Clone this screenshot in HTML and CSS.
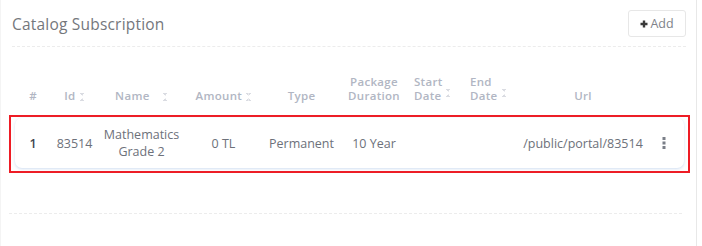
FILE: index.html
```html
<!DOCTYPE html>
<html>
<head>
<meta charset="utf-8">
<link rel="stylesheet" href="styles.css">
</head>
<body>
<div class="card">
  <div class="card-header">
    <h2 class="title">Catalog Subscription</h2>
    <button class="add-btn"><svg class="plus" width="8" height="8" viewBox="0 0 8 8"><path d="M4 0.5V7.5M0.5 4H7.5" stroke="#3a3a3a" stroke-width="2.4"/></svg>Add</button>
  </div>
  <div class="table">
    <div class="grid head">
      <div class="c center">#</div>
      <div class="c center">Id <span class="sort"></span></div>
      <div class="c center">Name <span class="sort gap"></span></div>
      <div class="c center">Amount <span class="sort"></span></div>
      <div class="c center">Type</div>
      <div class="c center two"><span class="ln">Package</span><span class="ln">Duration</span></div>
      <div class="c left two"><span class="ln">Start</span><span class="ln">Date <span class="sort up"></span></span></div>
      <div class="c left pl two"><span class="ln">End</span><span class="ln">Date <span class="sort up"></span></span></div>
      <div class="c center">Url</div>
      <div class="c"></div>
    </div>
    <div class="highlight">
      <div class="grid row">
        <div class="c center num">1</div>
        <div class="c center">83514</div>
        <div class="c center">Mathematics<br>Grade 2</div>
        <div class="c center">0 TL</div>
        <div class="c center">Permanent</div>
        <div class="c center">10 Year</div>
        <div class="c"></div>
        <div class="c"></div>
        <div class="c center">/public/portal/83514</div>
        <div class="c kebab"><svg width="4" height="12" viewBox="0 0 4 12"><rect x="0.5" y="0" width="3" height="3" fill="#7a7f88"/><rect x="0.5" y="4.5" width="3" height="3" fill="#7a7f88"/><rect x="0.5" y="9" width="3" height="3" fill="#7a7f88"/></svg></div>
      </div>
    </div>
    <div class="foot-line"></div>
  </div>
</div>
</body>
</html>
```
FILE: styles.css
```css
html, body {
  margin: 0;
  background: #fff;
}
body {
  font-family: "Open Sans", "Noto Sans", sans-serif;
}
.card {
  width: 697px;
  height: 246px;
  box-sizing: border-box;
  border-left: 1px solid #f4f4f4;
  border-right: 1px solid #e8e8e8;
}
.card-header {
  display: flex;
  justify-content: space-between;
  align-items: center;
  margin: 0 10px 0 11px;
  padding: 10px 0 9px;
  border-bottom: 1px dashed #ececec;
}
.title {
  margin: 0;
  font-size: 15.5px;
  font-weight: 400;
  color: #74777c;
  letter-spacing: 0.2px;
}
.add-btn {
  display: flex;
  align-items: center;
  gap: 2px;
  height: 27px;
  width: 58px;
  justify-content: center;
  border: 1px solid #e7e7e7;
  border-radius: 3px;
  background: #fff;
  font-family: inherit;
  font-size: 12.5px;
  color: #80838a;
  padding: 0;
}
.table {
  padding-top: 28px;
}
.grid {
  display: grid;
  grid-template-columns: 36px 47px 87px 77px 79px 66px 50px 55px 142px 30px;
}
.head {
  margin: 0 0 0 14px;
  height: 27px;
  align-items: end;
  font-size: 11.5px;
  line-height: 13px;
  font-weight: 600;
  color: #b1b6c3;
  letter-spacing: 0.3px;
}
.two {
  display: flex;
  flex-direction: column;
  gap: 1px;
}
.two.center { align-items: center; }
.ln { display: block; white-space: nowrap; }
.c.center { text-align: center; }
.c.left { text-align: left; padding-left: 7px; }
.c.pl { padding-left: 13px; }
.sort {
  display: inline-block;
  width: 5px;
  height: 8px;
  margin-left: 1px;
  vertical-align: -1px;
  background:
    linear-gradient(to top right, transparent 50%, #dadce2 50%) 0 0/2.5px 3px no-repeat,
    linear-gradient(to top left, transparent 50%, #dadce2 50%) 2.5px 0/2.5px 3px no-repeat,
    linear-gradient(to bottom right, transparent 50%, #dadce2 50%) 0 5px/2.5px 3px no-repeat,
    linear-gradient(to bottom left, transparent 50%, #dadce2 50%) 2.5px 5px/2.5px 3px no-repeat;
}
.sort.gap { margin-left: 10px; }
.sort.up { vertical-align: 3px; }
.highlight {
  margin: 13px 6px 0 8px;
  border: 2px solid #ee1c25;
  padding: 1px 4px 3px 4px;
}
.row {
  height: 50px;
  align-items: center;
  background: #fff;
  border-radius: 7px;
  box-shadow: 0 1px 3px rgba(170, 195, 230, 0.55);
  font-size: 12.5px;
  line-height: 17px;
  color: #6d717a;
}
.num {
  font-weight: 600;
  color: #40444f;
}
.kebab {
  display: flex;
  justify-content: flex-start;
  padding-left: 8px;
}
.foot-line {
  margin: 40px 14px 0 8px;
  border-top: 1px dashed #ececec;
}
```
